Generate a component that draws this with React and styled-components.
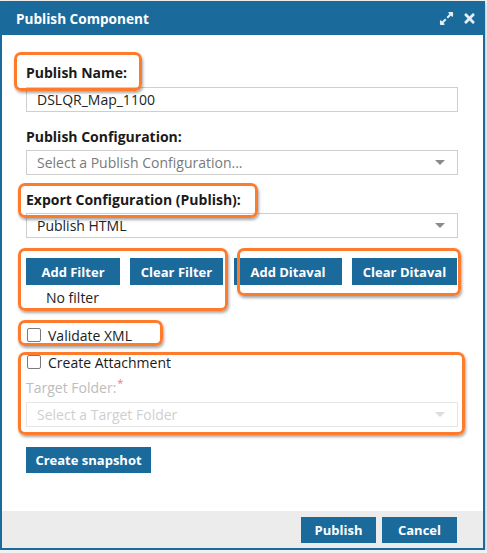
import React from 'react';
import styled, { createGlobalStyle } from 'styled-components';
import { FaExpandAlt, FaTimes } from 'react-icons/fa';

const GlobalStyle = createGlobalStyle`
  html, body {
    margin: 0;
    padding: 0;
    background: #f1f1f1;
    font-family: "Open Sans", "Noto Sans", sans-serif;
  }
`;

const Modal = styled.div`
  width: 485px;
  margin-top: 1px;
  box-sizing: border-box;
  border: 2px solid #1b6a9c;
  border-top: none;
  background: #fff;
  box-shadow: 0 2px 3px rgba(0, 0, 0, 0.3);
`;

const TitleBar = styled.div`
  height: 34px;
  margin: 0 -2px;
  padding: 0 8px 0 16px;
  background: #1b6a9c;
  display: flex;
  align-items: center;
  justify-content: space-between;
  color: #fff;
  font-size: 13.6px;
  font-weight: 700;
`;

const TitleIcons = styled.div`
  display: flex;
  align-items: center;
  gap: 8px;
  color: #e6eef4;
  svg { display: block; }
`;

const Body = styled.div`
  padding: 29px 25px 38px 24px;
`;

const Marked = styled.div`
  position: relative;
  display: flex;
  width: ${(p) => (p.$fit ? 'fit-content' : 'auto')};
  &::after {
    content: '';
    position: absolute;
    top: ${(p) => p.$t}px;
    right: ${(p) => p.$r}px;
    bottom: ${(p) => p.$b}px;
    left: ${(p) => p.$l}px;
    border: 3px solid #ff7b2c;
    border-radius: 7px;
    box-shadow: 1px 2px 3px rgba(0, 0, 0, 0.35);
    pointer-events: none;
  }
`;

const Field = styled.div`
  margin-top: ${(p) => p.$mt ?? 0}px;
  margin-bottom: ${(p) => p.$mb ?? 16}px;
`;

const Label = styled.div`
  font-size: 14px;
  line-height: 18px;
  font-weight: ${(p) => (p.$light ? 400 : 700)};
  color: ${(p) => (p.$light ? '#bdbdbd' : '#1a1a1a')};
  margin-top: ${(p) => p.$mt ?? 0}px;
  margin-bottom: ${(p) => p.$mb ?? 4}px;
`;

const Required = styled.sup`
  color: #ef7a7a;
  font-size: 11px;
  line-height: 0;
  margin-left: 1px;
`;

const TextBox = styled.div`
  height: 25px;
  box-sizing: border-box;
  border: 1px solid #cfcfcf;
  padding: 0 10px;
  display: flex;
  align-items: center;
  font-size: 14px;
  color: #222;
`;

const SelectBox = styled(TextBox)`
  justify-content: space-between;
  color: ${(p) => (p.$placeholder ? '#7a7a7a' : '#222')};
  border-color: ${(p) => (p.$disabled ? '#e6e6e6' : '#cfcfcf')};
  ${(p) => p.$disabled && 'color: #cfcfcf;'}
`;

const Caret = styled.span`
  width: 0;
  height: 0;
  margin-right: 2px;
  border-left: 5px solid transparent;
  border-right: 5px solid transparent;
  border-top: 5px solid ${(p) => (p.$disabled ? '#dcdcdc' : '#8a8a8a')};
`;

const ButtonRow = styled.div`
  display: flex;
  align-items: flex-start;
  gap: 11px;
  margin-top: 20px;
`;

const Group = styled.div`
  display: flex;
  flex-direction: column;
  flex: ${(p) => (p.$grow ? 1 : 'none')};
`;

const Buttons = styled.div`
  display: flex;
  gap: 10px;
`;

const Button = styled.button`
  width: ${(p) => p.$w}px;
  height: ${(p) => p.$h ?? 27}px;
  padding: 0;
  border: none;
  background: #1b6a9c;
  color: #fff;
  font-family: inherit;
  font-size: 13px;
  font-weight: 700;
  cursor: pointer;
`;

const Note = styled.div`
  font-size: 14px;
  line-height: 18px;
  color: #222;
  padding-left: 20px;
  margin-top: 4px;
`;

const CheckRow = styled.label`
  display: flex;
  align-items: center;
  gap: 7px;
  height: 18px;
  font-size: 14px;
  color: #1a1a1a;
`;

const Box = styled.span`
  width: 14px;
  height: 14px;
  box-sizing: border-box;
  margin-left: 1px;
  border: 1px solid #7a7a7a;
  border-radius: 2px;
  background: #fff;
`;

const Footer = styled.div`
  height: 37px;
  background: #ececec;
  display: flex;
  align-items: center;
  justify-content: flex-end;
  gap: 6px;
  padding-right: 26px;
`;

export default function App() {
  return (
    <>
      <GlobalStyle />
      <Modal>
        <TitleBar>
          <span>Publish Component</span>
          <TitleIcons>
            <FaExpandAlt size={15} />
            <FaTimes size={15} />
          </TitleIcons>
        </TitleBar>
        <Body>
          <Field>
            <Marked $fit $t={-12} $r={-15} $b={-4} $l={-12}>
              <Label $mb={5}>Publish Name:</Label>
            </Marked>
            <TextBox>DSLQR_Map_1100</TextBox>
          </Field>
          <Field>
            <Label>Publish Configuration:</Label>
            <SelectBox $placeholder>
              Select a Publish Configuration...
              <Caret />
            </SelectBox>
          </Field>
          <Field $mb={0}>
            <Marked $fit $t={-8} $r={-17} $b={-5} $l={-8}>
              <Label>Export Configuration (Publish):</Label>
            </Marked>
            <SelectBox>
              Publish HTML
              <Caret />
            </SelectBox>
          </Field>
          <ButtonRow>
            <Marked $t={-10} $r={-5} $b={-4} $l={-8}>
              <Group>
                <Buttons>
                  <Button $w={94}>Add Filter</Button>
                  <Button $w={93}>Clear Filter</Button>
                </Buttons>
                <Note>No filter</Note>
              </Group>
            </Marked>
            <Marked $t={-10} $r={-4} $b={-11} $l={3}>
              <Buttons>
                <Button $w={108}>Add Ditaval</Button>
                <Button $w={105}>Clear Ditaval</Button>
              </Buttons>
            </Marked>
          </ButtonRow>
          <Field $mt={19} $mb={0}>
            <Marked $fit $t={-6} $r={-31} $b={-2} $l={-8}>
              <CheckRow>
                <Box />
                Validate XML
              </CheckRow>
            </Marked>
          </Field>
          <Field $mt={9} $mb={20}>
            <Marked $t={-1} $r={-7} $b={-8} $l={-8}>
              <Group $grow>
                <CheckRow>
                  <Box />
                  Create Attachment
                </CheckRow>
                <Label $light $mt={8} $mb={5}>
                  Target Folder:<Required>*</Required>
                </Label>
                <SelectBox $disabled>
                  Select a Target Folder
                  <Caret $disabled />
                </SelectBox>
              </Group>
            </Marked>
          </Field>
          <Button $w={125} $h={26}>Create snapshot</Button>
        </Body>
        <Footer>
          <Button $w={75} $h={26}>Publish</Button>
          <Button $w={75} $h={26}>Cancel</Button>
        </Footer>
      </Modal>
    </>
  );
}
